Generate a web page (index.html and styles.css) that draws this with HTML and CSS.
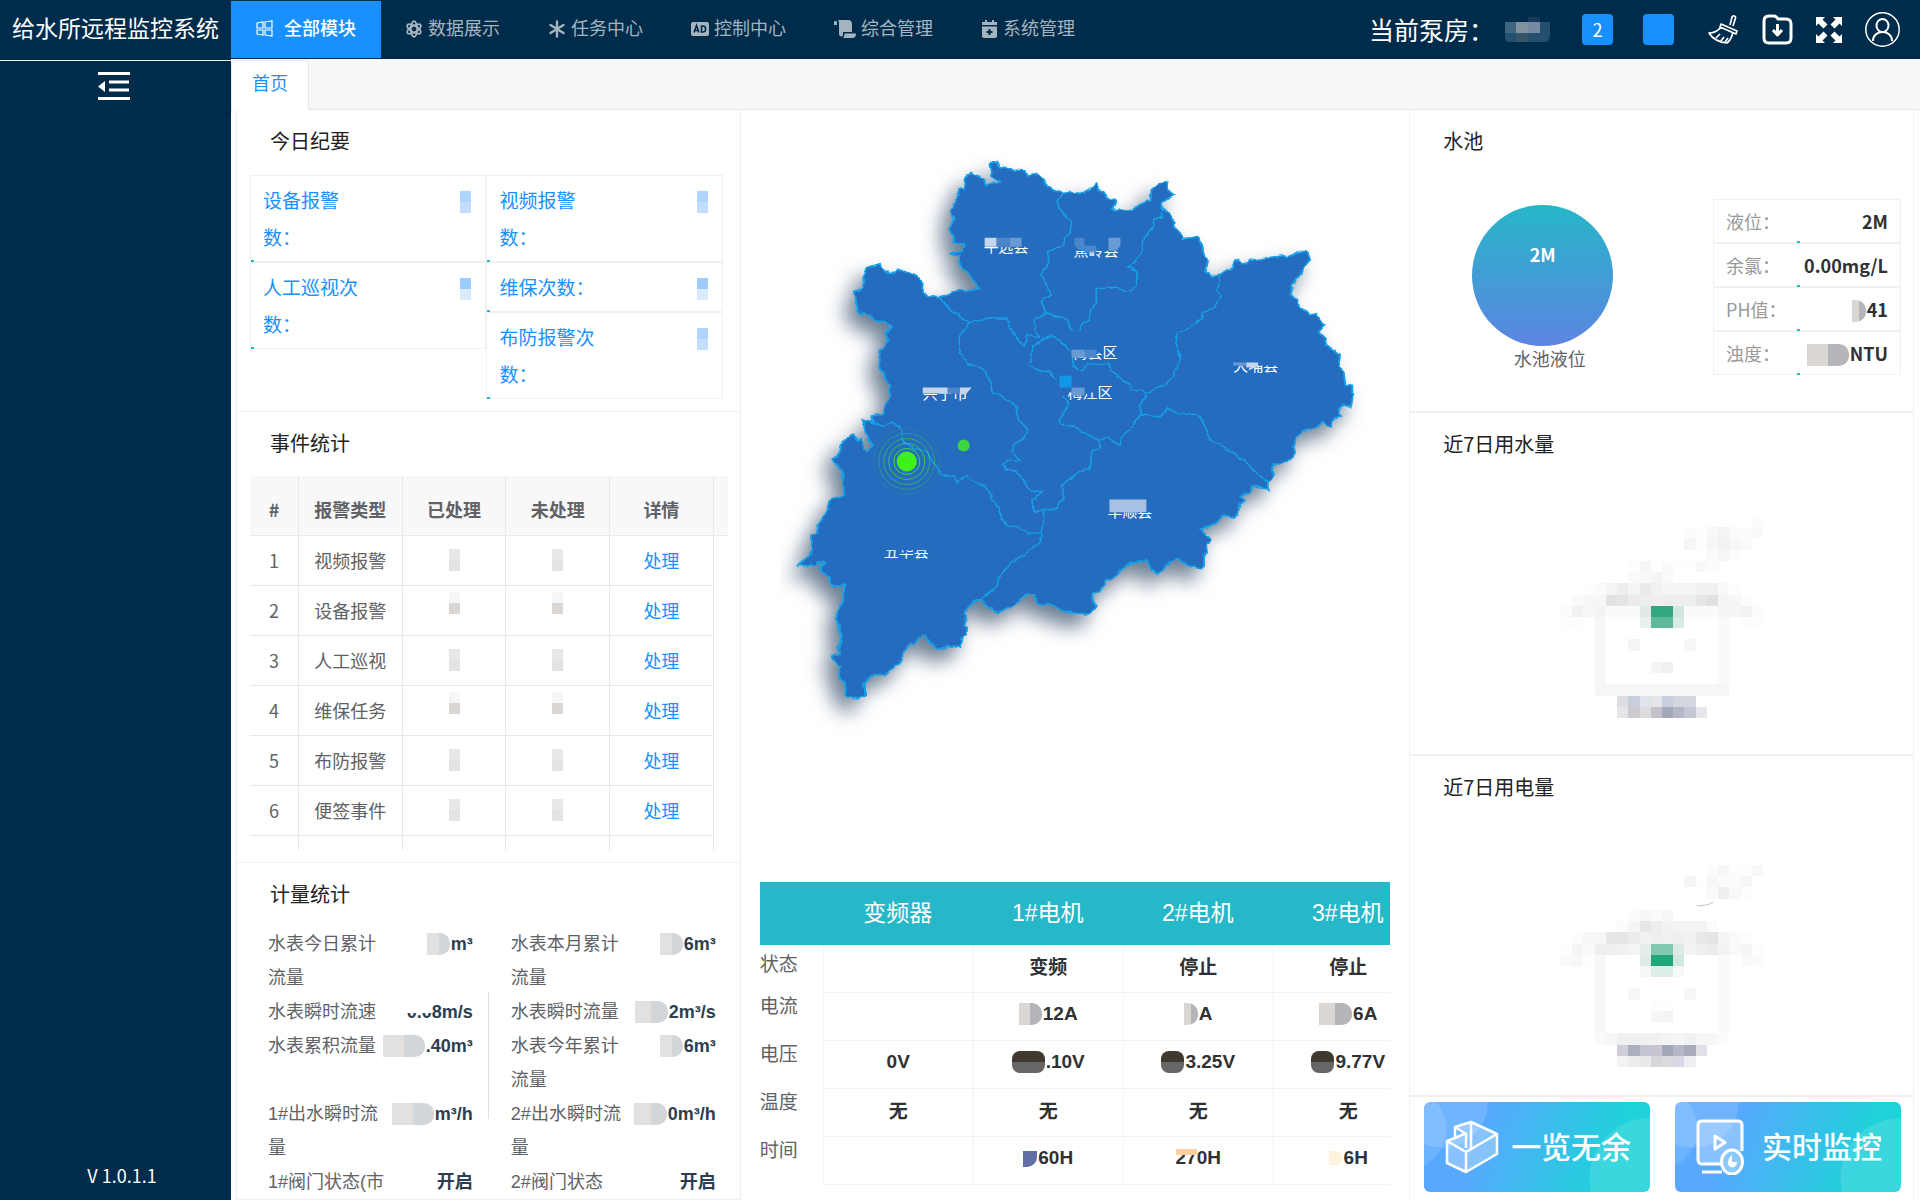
FILE: index.html
```
<!DOCTYPE html>
<html lang="zh-CN">
<head>
  <meta charset="UTF-8">
  <meta name="viewport" content="width=device-width, initial-scale=1.0">
  <title>给水所远程监控系统</title>
  <link rel="stylesheet" href="styles.css">
</head>
<body>

  <!-- 顶部导航 -->
  <header class="header">
    <div class="logo">给水所远程监控系统</div>
    <nav class="nav">
      <a href="#" class="nav-item active">
        <svg width="17" height="17" viewBox="0 0 17 17" fill="none" stroke="currentColor" stroke-width="1.2"><path d="M1 3l6-1v6H1zM9 2l7-1v7H9zM1 10h6v5l-6-1zM9 10h7v6l-7-1z"/></svg>
        <span>全部模块</span>
      </a>
      <a href="#" class="nav-item">
        <svg width="18" height="18" viewBox="0 0 18 18" fill="none" stroke="currentColor" stroke-width="1.8"><ellipse cx="9" cy="9" rx="3.2" ry="7.8"/><ellipse cx="9" cy="9" rx="3.2" ry="7.8" transform="rotate(60 9 9)"/><ellipse cx="9" cy="9" rx="3.2" ry="7.8" transform="rotate(-60 9 9)"/></svg>
        <span>数据展示</span>
      </a>
      <a href="#" class="nav-item">
        <svg width="18" height="18" viewBox="0 0 18 18" stroke="currentColor" stroke-width="2.4" stroke-linecap="round"><path d="M9 1.500v15M2.500 5l13 8M15.500 5l-13 8"/></svg>
        <span>任务中心</span>
      </a>
      <a href="#" class="nav-item">
        <svg width="18" height="18" viewBox="0 0 18 18"><rect y="2" width="18" height="14" rx="2" fill="currentColor"/><path d="M3 12.500l2.500-7 2.500 7M4 10.500h3M10.500 6v6h1.500c3.500 0 3.500-6 0-6z" fill="none" stroke="#002c4b" stroke-width="1.600"/></svg>
        <span>控制中心</span>
      </a>
      <a href="#" class="nav-item">
        <svg width="22" height="18" viewBox="0 0 22 18" fill="currentColor"><path d="M0 5V2.500C0 .5 3 .5 3 2.500V5zM4 0h10c3 0 4 2 4 4v8H9v3c0 2-4 2-4-1V3c0-2-.5-2.500-1-3zM10.500 13.500H22c0 3-1 4.500-4 4.500H8c2 0 2.500-2 2.500-4.500z"/></svg>
        <span>综合管理</span>
      </a>
      <a href="#" class="nav-item">
        <svg width="17" height="18" viewBox="0 0 17 18"><path d="M4 0h2v2h5V0h2v2h3v3H1V2h3zM1 6.500h15V16q0 2-2 2H3q-2 0-2-2z" fill="currentColor"/><path d="M8.500 9v6M5.500 12h6" stroke="#002c4b" stroke-width="2"/></svg>
        <span>系统管理</span>
      </a>
    </nav>
    <div class="tools">
      <span class="pump">当前泵房：</span>
      <svg class="pump-name" width="45" height="26" viewBox="0 0 45 26"><path d="M0 5h45v12c0 5-2 8-5 8H4c-3 0-4-2-4-5z" fill="#24506e"/><path d="M0 5h11v11H0z" fill="#3d6580"/><path d="M11 5h12v11H11z" fill="#7f929d"/><path d="M23 5h12v11H23z" fill="#7889a4"/><path d="M23 0h12v5H23z" fill="#163a5c"/><path d="M11 16h12v9H11z" fill="#375469"/></svg>
      <button class="badge" type="button">2</button>
      <button class="badge" type="button" aria-label="消息"></button>
      <button class="tool broom" type="button" aria-label="清理">
        <svg width="31" height="30" viewBox="0 0 31 30" fill="none" stroke="#fff" stroke-width="1.700" stroke-linejoin="round"><path d="M22 10l2-8c1-2 4-1 3.500 1L25 11M13 9l16 7-1 3-16-7zM13 12c-3 4-7 6-12 6 3 5 9 9 18 10 4-3 5-6 6-11M8 23l4-4M13 26l3-4M17 27l3-4"/></svg>
      </button>
      <button class="tool" type="button" aria-label="下载">
        <svg width="31" height="31" viewBox="0 0 31 31" fill="none" stroke="#fff" stroke-width="3" stroke-linejoin="round"><path d="M2 7q0-5 5-5h5q2 0 4 3h8q5 0 5 5v14q0 5-5 5H7q-5 0-5-5z"/><path d="M15.500 10v10M11 16l4.500 5 4.500-5"/></svg>
      </button>
      <button class="tool" type="button" aria-label="全屏">
        <svg width="26" height="26" viewBox="0 0 26 26" fill="#fff"><path d="M0 0h9L6.500 2.500l5 5-4 4-5-5L0 9zM26 0v9l-2.500-2.500-5 5-4-4 5-5L17 0zM0 26v-9l2.500 2.500 5-5 4 4-5 5L9 26zM26 26h-9l2.500-2.500-5-5 4-4 5 5L26 17z"/></svg>
      </button>
      <button class="tool" type="button" aria-label="用户">
        <svg width="35" height="35" viewBox="0 0 35 35" fill="none" stroke="#fff" stroke-width="1.500"><circle cx="17.500" cy="17.500" r="16.700"/><ellipse cx="17.500" cy="13.500" rx="6" ry="6.500" stroke-width="2"/><path d="M8 29c0-12 19-12 19 0" stroke-width="2"/></svg>
      </button>
    </div>
  </header>

  <div class="body">
    <!-- 侧边栏 -->
    <aside class="sidebar">
      <button class="collapse" type="button" aria-label="收起菜单">
        <svg width="32" height="28" viewBox="0 0 32 28"><path d="M0 1.500h32M11 10h20M11 18h20M0 26.500h32" stroke="#fff" stroke-width="3"/><path d="M7 9v11L0 14.500z" fill="#fff"/></svg>
      </button>
      <div class="version">V 1.0.1.1</div>
    </aside>

    <main class="main">
      <div class="tabs"><a href="#" class="tab">首页</a></div>

      <div class="columns">
        <!-- 左侧 -->
        <div class="col">
          <section class="panel">
            <h2>今日纪要</h2>
            <div class="summary">
              <div class="summary-col">
                <div class="summary-item"><span>设备报警数：</span><i class="cell c-blue"></i></div>
                <div class="summary-item"><span>人工巡视次数：</span><i class="cell c-sky"></i></div>
              </div>
              <div class="summary-col">
                <div class="summary-item"><span>视频报警数：</span><i class="cell c-blue"></i></div>
                <div class="summary-item"><span>维保次数：</span><i class="cell c-sky"></i></div>
                <div class="summary-item"><span>布防报警次数：</span><i class="cell c-blue"></i></div>
              </div>
            </div>
          </section>

          <section class="panel">
            <h2>事件统计</h2>
            <div class="event-wrap">
              <table class="events">
                <colgroup><col class="w-index"><col><col><col><col><col class="w-gutter"></colgroup>
                <thead>
                  <tr><th>#</th><th>报警类型</th><th>已处理</th><th>未处理</th><th>详情</th><th></th></tr>
                </thead>
                <tbody>
                  <tr><td>1</td><td>视频报警</td><td><i class="cell c-gray"></i></td><td><i class="cell c-gray"></i></td><td><a href="#">处理</a></td><td></td></tr>
                  <tr><td>2</td><td>设备报警</td><td><i class="cell c-low"></i></td><td><i class="cell c-low"></i></td><td><a href="#">处理</a></td><td></td></tr>
                  <tr><td>3</td><td>人工巡视</td><td><i class="cell c-gray"></i></td><td><i class="cell c-gray"></i></td><td><a href="#">处理</a></td><td></td></tr>
                  <tr><td>4</td><td>维保任务</td><td><i class="cell c-low"></i></td><td><i class="cell c-low"></i></td><td><a href="#">处理</a></td><td></td></tr>
                  <tr><td>5</td><td>布防报警</td><td><i class="cell c-gray"></i></td><td><i class="cell c-gray"></i></td><td><a href="#">处理</a></td><td></td></tr>
                  <tr><td>6</td><td>便签事件</td><td><i class="cell c-gray"></i></td><td><i class="cell c-gray"></i></td><td><a href="#">处理</a></td><td></td></tr>
                  <tr><td></td><td></td><td></td><td></td><td></td><td></td></tr>
                </tbody>
              </table>
            </div>
          </section>

          <section class="panel">
            <h2>计量统计</h2>
            <div class="meters">
              <div class="meter"><span>水表今日累计流量</span><b><i class="blob w2"></i>m³</b></div>
              <div class="meter"><span>水表本月累计流量</span><b><i class="blob w2"></i>6m³</b></div>
              <div class="meter"><span>水表瞬时流速</span><b><em class="wiped">0.0</em>8m/s</b></div>
              <div class="meter"><span>水表瞬时流量</span><b><i class="blob w3"></i>2m³/s</b></div>
              <div class="meter"><span>水表累积流量</span><b><i class="blob w4"></i>.40m³</b></div>
              <div class="meter"><span>水表今年累计流量</span><b><i class="blob w2"></i>6m³</b></div>
              <div class="meter"><span>1#出水瞬时流量</span><b><i class="blob w4"></i>m³/h</b></div>
              <div class="meter"><span>2#出水瞬时流量</span><b><i class="blob w3"></i>0m³/h</b></div>
              <div class="meter"><span>1#阀门状态(市</span><b>开启</b></div>
              <div class="meter"><span>2#阀门状态</span><b>开启</b></div>
            </div>
          </section>
        </div>

        <!-- 中间 -->
        <div class="col center">
          <svg class="map" viewBox="0 0 600 600" role="img" aria-label="区域地图">
            <defs>
              <filter id="rough" x="-5%" y="-5%" width="110%" height="110%" color-interpolation-filters="sRGB">
                <feTurbulence type="fractalNoise" baseFrequency="0.12" numOctaves="2" seed="4"/>
                <feDisplacementMap in="SourceGraphic" scale="5" xChannelSelector="R" yChannelSelector="G"/>
              </filter>
            </defs>
            <g class="map-shadow"><g filter="url(#rough)"><g transform="scale(.3827 .3333)">
              <path class="land" d="M550 68L568 70 575 80 600 86 640 90 645 108 660 106 675 102 690 118 700 140 718 152 738 160 762 157 795 162 812 144 826 130 836 148 848 160 860 180 880 182 870 205 880 213 925 208 940 196 960 182 970 180 972 150 990 132 1012 128 1012 148 1032 166 1000 185 998 205 1016 216 1032 245 1034 265 1048 280 1055 296 1090 292 1106 316 1108 340 1120 365 1114 398 1132 408 1156 402 1185 378 1192 360 1220 372 1228 362 1275 354 1320 348 1326 354 1340 350 1352 334 1376 336 1388 360 1376 376 1370 392 1352 418 1340 435 1342 455 1336 464 1355 484 1358 500 1388 526 1404 522 1416 545 1428 558 1410 576 1425 592 1430 616 1448 628 1466 648 1462 675 1476 700 1480 738 1498 740 1498 780 1494 804 1476 796 1462 810 1466 828 1450 840 1440 862 1420 848 1404 862 1370 872 1350 896 1345 920 1348 940 1340 955 1325 965 1310 975 1295 970 1288 988 1290 1010 1280 1030 1278 1050 1236 1040 1230 1060 1205 1068 1215 1082 1202 1090 1200 1120 1188 1133 1160 1128 1145 1148 1118 1165 1102 1170 1128 1202 1118 1215 1120 1238 1110 1248 1110 1278 1100 1288 1070 1280 1042 1257 1022 1268 990 1305 972 1290 960 1265 930 1270 905 1277 895 1292 868 1318 852 1324 850 1338 835 1355 820 1358 820 1385 828 1398 820 1412 808 1425 760 1420 736 1414 720 1400 675 1392 665 1368 645 1364 630 1380 622 1395 600 1408 568 1420 545 1408 530 1382 510 1382 482 1424 488 1440 482 1458 490 1468 486 1490 474 1500 470 1526 448 1520 412 1530 395 1515 378 1488 360 1500 352 1515 338 1518 335 1532 320 1542 322 1560 312 1575 298 1580 290 1595 270 1610 240 1610 220 1630 220 1668 210 1676 178 1676 172 1666 172 1630 155 1618 155 1585 136 1555 155 1545 152 1525 162 1495 152 1470 148 1430 152 1410 168 1385 168 1335 148 1344 132 1338 130 1315 108 1298 108 1280 118 1270 100 1268 96 1278 46 1280 80 1250 84 1230 80 1215 82 1190 96 1185 102 1155 115 1130 122 1115 130 1082 158 1072 168 1066 165 1030 162 998 138 960 150 952 162 908 188 890 196 885 200 905 212 898 220 925 232 932 242 918 232 900 224 880 216 838 245 850 242 830 272 822 275 795 292 772 285 740 275 715 258 670 262 635 284 605 276 580 292 560 272 545 256 545 240 528 206 520 200 490 196 455 218 445 218 415 230 382 262 372 274 398 300 398 310 388 335 400 360 410 376 432 374 455 384 468 412 474 440 466 470 450 500 452 522 446 508 425 490 400 470 378 468 350 446 342 478 334 484 315 455 308 455 290 442 270 455 238 448 215 460 180 470 145 484 148 486 115 500 98 535 116 538 140 575 125 556 110Z"/>
              <path class="line" d="M738 160L728 185 730 208 750 230 766 252 760 275 745 295 738 318 700 336 704 368 684 404 708 462 684 485 696 522
                M1000 215L998 235 976 240 980 260 955 290 946 345 912 385 934 395 932 435 918 457 882 446 828 446 828 488 812 515 812 540 790 555 785 576
                M696 522L750 535 766 575
                M696 522L665 540 668 575 680 592 645 588 641 618 618 595 592 538 548 538 495 548 470 530 440 505 420 474
                M495 548L470 590 468 630 490 672 530 688 546 712 556 760 598 782 618 800 625 840 648 870 640 895 612 915 608 935 628 962 600 962 582 975 590 990 605 990 640 1018 648 1048 685 1058 662 1080 665 1120 690 1115 690 1140 684 1180 650 1182 625 1165 595 1160 576 1130 574 1105 556 1085 540 1045 510 1028 488 1010 464 1030 455 1012 425 1008 400 965 385 940 330 915 316 900 316 870 296 848 272 858 232 845
                M668 610L680 605 710 588 740 610 766 640 766 680 790 690 805 672 838 675 860 672 870 695 925 750 962 760
                M680 605L662 620 655 678 680 696 705 695 722 718
                M740 770L758 795 730 840 735 857 770 864 830 900 842 920 838 930 818 932 808 988 785 995 738 1040 745 1070 720 1108 690 1115
                M830 900L855 895 890 915 895 890 925 860 930 840 945 822 940 800 962 765
                M962 760L1000 740 1030 710 1048 658 1036 610 1040 580 1062 570 1102 540 1106 518 1138 508 1155 468 1142 450 1156 402
                M945 822L992 836 1012 805 1045 824 1092 825 1104 840 1130 905 1160 920 1230 975 1236 992 1280 1028
                M684 1180L678 1210 652 1235 605 1270 572 1315 568 1340 530 1380"/>
            </g></g></g>

            <!-- 区县名称 -->
            <g class="place">
              <text x="204" y="112">平远县</text>
              <text x="294" y="116">蕉岭县</text>
              <text x="293" y="218">梅县区</text>
              <text x="288" y="258">梅江区</text>
              <text x="143" y="259">兴宁市</text>
              <text x="454" y="231">大埔县</text>
              <text x="328" y="378">丰顺县</text>
              <text x="104" y="418">五华县</text>
            </g>
            <g fill="#256cbe">
              <path d="M203 96h48v11h-48zM293 100h48v11h-48zM291 202h33v11h-33zM286 242h32v11h-32zM142 243h48v11h-48zM453 215h48v11h-48zM327 362h48v11h-48zM103 402h48v9h-48z"/>
            </g>
            <path fill="#c5d5ec" d="M205 98h12v9h-12zM143 248h25v6h-25zM467 223h12v5h-12zM180 248h12l-6 7h-6z"/>
            <path fill="#6a9ad4" d="M230 98h12v9h-12zM292 210h13v8h-13zM292 248h13v8h-13zM454 223h13v3h-13zM329 98h12v8l-4 5h-8z"/>
            <path fill="#4b86cb" d="M217 98h13v9h-13zM295 98h10v12h-6l-4-4zM305 106h12v6h-12zM168 248h12v6h-12zM305 210h12v8h-12z"/>
            <path fill="#a8c0e5" d="M330 360h37v13h-37z"/>
            <path fill="#1296e8" d="M280 236h12v12h-12z"/>

            <!-- 站点 -->
            <g fill="none" stroke="#3edc2c" stroke-width="1">
              <circle cx="127" cy="322" r="13"/>
              <circle cx="127" cy="322" r="18" opacity=".8"/>
              <circle cx="127" cy="322" r="23" opacity=".6"/>
              <circle cx="127" cy="322" r="28" opacity=".4"/>
              <circle cx="127" cy="322" r="33" opacity=".15"/>
            </g>
            <circle cx="127" cy="322" r="10" fill="#40f01c"/>
            <circle cx="184" cy="306" r="6" fill="#3cd73c"/>
          </svg>

          <div class="motor-wrap">
            <table class="motors">
              <thead>
                <tr><th></th><th>变频器</th><th>1#电机</th><th>2#电机</th><th>3#电机</th></tr>
              </thead>
              <tbody>
                <tr><th scope="row">状态</th><td></td><td>变频</td><td>停止</td><td>停止</td></tr>
                <tr><th scope="row">电流</th><td></td><td><i class="blob w2 mid"></i>12A</td><td><i class="blob w1 mid"></i>A</td><td><i class="blob w3 mid"></i>6A</td></tr>
                <tr><th scope="row">电压</th><td>0V</td><td><i class="blob w3 dark"></i>.10V</td><td><i class="blob w2 dark"></i>3.25V</td><td><i class="blob w2 dark"></i>9.77V</td></tr>
                <tr><th scope="row">温度</th><td>无</td><td>无</td><td>无</td><td>无</td></tr>
                <tr><th scope="row">时间</th><td></td><td><i class="blob w1 indigo"></i>60H</td><td><em class="wiped orange">27</em>0H</td><td><i class="blob w1 cream"></i>6H</td></tr>
              </tbody>
            </table>
          </div>
        </div>

        <!-- 右侧 -->
        <div class="col right">
          <section class="panel">
            <h2>水池</h2>
            <div class="pool">
              <figure class="gauge">
                <div class="ball">2M</div>
                <figcaption>水池液位</figcaption>
              </figure>
              <dl class="quality">
                <div><dt>液位：</dt><dd>2M</dd></div>
                <div><dt>余氯：</dt><dd>0.00mg/L</dd></div>
                <div><dt>PH值：</dt><dd><i class="blob w1 mid"></i>41</dd></div>
                <div><dt>浊度：</dt><dd><i class="blob w4 mid"></i>NTU</dd></div>
              </dl>
            </div>
          </section>

          <section class="panel">
            <h2>近7日用水量</h2>
            <div class="empty"><svg id="water" viewBox="0 0 18 18" shape-rendering="crispEdges"></svg></div>
          </section>

          <section class="panel">
            <h2>近7日用电量</h2>
            <div class="empty power"><svg id="power" viewBox="0 0 18 18" shape-rendering="crispEdges"></svg></div>
          </section>

          <section class="panel actions">
            <button class="action" type="button">
              <svg width="54" height="54" viewBox="0 0 54 54" fill="none" stroke="#fff" stroke-width="2.500" stroke-linejoin="round"><path d="M1 21l20-7-11-7L26 1l27 13v20L21 53 1 43z" fill="#fff" fill-opacity=".3" stroke="none"/><path d="M2 21l8-3V7l16-5 26 12v20L21 52 2 43zM2 21l19 11 31-18M21 32v20M10 7l11 7v14M10 18l11-5M26 2v28"/></svg>
              <span>一览无余</span>
            </button>
            <button class="action" type="button">
              <svg width="48" height="56" viewBox="0 0 48 56" fill="none" stroke="#fff" stroke-width="3" stroke-linejoin="round"><path d="M25 45H6q-4 0-4-5V6q0-4 4-4h36q4 0 4 4v26" fill="#fff" fill-opacity=".3"/><path d="M19 17v13l10-6.500zM6 53h20"/><ellipse cx="36" cy="43" rx="10.500" ry="12" fill="#8cc9f8"/><path d="M36 36v7h5c0 7-9 7-9 1 0-3 1-5 4-8z" fill="#fff" stroke="none"/></svg>
              <span>实时监控</span>
            </button>
          </section>
        </div>
      </div>
    </main>
  </div>

  <script src="script.js"></script>
</body>
</html>
```
FILE: styles.css
```
* { box-sizing: border-box; }

body {
  margin: 0;
  height: 100vh;
  display: flex;
  flex-direction: column;
  overflow: hidden;
  background: #fff;
  color: #606266;
  font-family: "Noto Sans CJK SC", sans-serif;
  font-size: 18px;
}

a { color: #1890ff; text-decoration: none; }
button { padding: 0; border: none; background: none; color: #fff; font-family: inherit; cursor: pointer; }
h2, figure, dl, dd { margin: 0; }

/* header */
.header {
  display: flex;
  flex: none;
  height: 59px;
  background: #002c4b;
  color: #fff;
}

.logo {
  width: 231px;
  padding-left: 12px;
  font-size: 23px;
  line-height: 55px;
  white-space: nowrap;
}

.nav { display: flex; padding: 1px 0; }

.nav-item {
  display: flex;
  align-items: center;
  gap: 5px;
  padding: 0 24px;
  color: #a6b4bf;
  white-space: nowrap;
}

.nav-item svg { margin-bottom: 2px; }
.nav-item span { line-height: 52px; padding-bottom: 5px; }
.nav-item.active { gap: 11px; padding: 0 25px; background: #1890ff; color: #fff; font-weight: 500; }

.tools {
  display: flex;
  align-items: center;
  gap: 23px;
  margin-left: auto;
  padding-right: 20px;
}

.pump { font-size: 25px; line-height: 56px; padding-bottom: 2px; white-space: nowrap; margin-right: -12px; }
.pump-name { margin-right: 9px; }

.badge {
  width: 31px;
  height: 31px;
  margin-right: 7px;
  border-radius: 4px;
  background: #1890ff;
  font-size: 18px;
  line-height: 29px;
}

.tool { display: flex; }
.broom { margin-left: 4px; }

/* sidebar */
.body { display: flex; flex: 1; min-height: 0; }

.sidebar {
  display: flex;
  flex-direction: column;
  flex: none;
  width: 231px;
  margin-top: 1px;
  border-top: 1px solid #fff;
  background: #002c4b;
  box-shadow: 0 -1px #002c4b;
}

.collapse {
  height: 50px;
  padding: 4px 4px 0 0;
  box-shadow: 0 1px 3px rgba(0, 21, 41, 0.4);
}

.version { margin-top: auto; padding: 0 0 12px 13px; color: #fff; font-size: 18px; text-align: center; }

/* tabs */
.main { flex: 1; min-width: 0; overflow: hidden; }
.tabs { display: flex; height: 51px; padding-top: 1px; background: #f7f7f7; border-bottom: 1px solid #e8e8e8; }

.tab {
  height: 50px;
  padding: 0 20px;
  border: 1px solid #e8e8e8;
  border-bottom: none;
  border-radius: 5px 5px 0 0;
  background: #fff;
  line-height: 42px;
}

.columns {
  display: grid;
  grid-template-columns: 151fr 200fr 151fr;
  padding: 0 6px 0 5px;
}

.col { min-width: 0; }

.panel {
  border: 1px solid #f0f0f0;
  border-top: none;
}

h2 {
  height: 64px;
  padding-left: 33px;
  color: #222;
  font-size: 20px;
  font-weight: 400;
  line-height: 62px;
}

/* masked digits */
.cell { display: inline-block; width: 11px; height: 22px; vertical-align: middle; }
.c-blue { background: linear-gradient(#aed4ff 50%, #c3deff 50%); }
.c-sky { background: linear-gradient(#9dcbff 50%, #d9ebff 50%); }
.c-gray { background: linear-gradient(#e9e8e8 50%, #e4e3e2 50%); }
.c-low { background: linear-gradient(#f5f6f7 50%, #d9d6d4 50%); }

.blob {
  display: inline-block;
  height: 22px;
  margin-right: 1px;
  border-radius: 0 10px 10px 0;
  background: linear-gradient(90deg, #e2e1e0 50%, #d3d6d8 50%);
  vertical-align: -5px;
}

.w1 { width: 14px; }
.w2 { width: 23px; }
.w3 { width: 33px; }
.w4 { width: 42px; }
.mid { background: linear-gradient(90deg, #d9d6d4 50%, #b4b5b8 50%); }
.dark { border-radius: 8px; background: linear-gradient(#40392f 50%, #666 50%); }
.indigo { background: #6070a4; border-radius: 0 0 10px 0; height: 16px; vertical-align: -3px; }
.cream { background: #fff3e0; height: 14px; vertical-align: -1px; }

.wiped { position: relative; font-style: normal; }
.wiped::after {
  content: "";
  position: absolute;
  top: 0;
  left: 0;
  right: 0;
  height: 11px;
  background: #fff;
}
.orange::after { top: 2px; height: 6px; background: #ffcf9f; }

/* summary */
.summary { display: flex; align-items: flex-start; padding: 1px 17px 12px 13px; }
.summary-col { flex: 1; }

.summary-item {
  position: relative;
  display: flex;
  justify-content: space-between;
  padding: 5px 14px 6px 12px;
  border: 1px solid #f0f0f0;
  color: #1890ff;
  font-size: 19px;
  line-height: 37px;
}

.summary-item span { width: 110px; }
.summary-item .cell { margin-top: 10px; }

.summary-item::after,
.quality div::after {
  content: "";
  position: absolute;
  left: 0;
  bottom: -1px;
  width: 3px;
  height: 2px;
  background: #26b8c9;
}

/* events */
.event-wrap { height: 374px; margin: 0 12px 12px 13px; overflow: hidden; }

.events {
  width: 100%;
  border-collapse: separate;
  border-spacing: 0;
  table-layout: fixed;
  text-align: center;
}

.w-index { width: 49px; }
.w-gutter { width: 14px; }

.events th, .events td {
  padding: 0;
  border-right: 1px solid #e8e8e8;
  border-bottom: 1px solid #e8e8e8;
}

.events th { height: 60px; padding-top: 6px; background: #f8f8f8; font-weight: 700; }
.events td { height: 50px; padding-bottom: 2px; line-height: 28px; }
.events th:last-child { border-right: none; }
.events td:last-child { border: none; }
.events .cell { margin-bottom: 4px; }
.events .c-low { margin-bottom: 14px; }

/* meters */
.meters {
  position: relative;
  display: grid;
  grid-template-columns: minmax(0, 1fr) minmax(0, 1fr);
  column-gap: 38px;
  padding: 0 24px 0 31px;
  font-family: "Liberation Sans", "Noto Sans CJK SC", sans-serif;
  line-height: 34px;
}

.meters::before {
  content: "";
  position: absolute;
  top: 65px;
  left: 50%;
  height: 127px;
  border-left: 1px solid #e0e0e0;
}

.meter { display: flex; justify-content: space-between; align-items: flex-start; }
.meter span { width: 116px; word-break: break-all; }
.meter b { color: #2c3e50; white-space: nowrap; }

/* map */
.center { padding: 30px 19px 0 19px; }
.map { display: block; width: 95%; margin-left: 20px; }
.map-shadow { filter: drop-shadow(-9px 12px 10px rgba(10, 40, 75, 0.6)); }
.land { fill: #256cbe; stroke: #16a0ea; stroke-width: 5; }
.line { fill: none; stroke: #16a0ea; stroke-width: 4; }
.place text { fill: #fff; font-size: 15px; }

/* motors */
.motor-wrap { margin-top: 143px; overflow: hidden; }

.motors {
  width: 663px;
  border-spacing: 0;
  table-layout: fixed;
  font-family: "Liberation Sans", "Noto Sans CJK SC", sans-serif;
  font-size: 19px;
  text-align: center;
}

.motors th { padding: 0; font-weight: 400; }
.motors thead th { height: 63px; padding-bottom: 5px; background: #26b8c9; color: #fff; font-size: 23px; }
.motors thead th:first-child { width: 63px; }
.motors tbody th { line-height: 28px; text-align: left; vertical-align: top; }
.motors tbody tr:first-child th { padding-top: 6px; }

.motors td {
  height: 48px;
  padding: 0 0 5px;
  border-left: 1px solid #f3f3f3;
  border-bottom: 1px solid #f3f3f3;
  color: #303133;
  font-weight: 700;
}

/* right column */
.right .panel + .panel { border-top: 1px solid #f0f0f0; }
.pool { display: flex; justify-content: space-between; padding: 25px 12px 36px 62px; }
.gauge { padding-top: 6px; }

.ball {
  width: 141px;
  height: 141px;
  border-radius: 50%;
  background: linear-gradient(#26b6c8, #5c85e2);
  color: #fff;
  font-weight: 700;
  line-height: 99px;
  text-align: center;
}

.gauge figcaption { padding-left: 14px; line-height: 24px; text-align: center; }
.quality { width: 188px; }

.quality div {
  position: relative;
  display: flex;
  justify-content: space-between;
  padding: 0 12px;
  border: 1px solid #f0f0f0;
  line-height: 42px;
}

.quality div::after { left: 83px; }
.quality dt { color: #999; }
.quality dd { color: #303133; font-weight: 700; }

.empty { display: flex; justify-content: center; padding: 39px 0 36px; }
.empty svg { width: 202px; height: 202px; }
.power { padding: 45px 0 28px; }

.actions { display: flex; gap: 25px; padding: 5px 12px 20px 14px; }

.action {
  display: flex;
  flex: 1;
  align-items: center;
  justify-content: space-between;
  height: 90px;
  padding: 0 19px 0 21px;
  border-radius: 6px;
  background:
    radial-gradient(circle at 100% 85%, rgba(255, 255, 255, 0.12) 60px, transparent 61px),
    radial-gradient(circle at 8% 0, rgba(255, 255, 255, 0.14) 45px, transparent 46px),
    radial-gradient(circle at -8% 30%, rgba(255, 255, 255, 0.12) 40px, transparent 41px),
    linear-gradient(110deg, #58a8ff 25%, #1fd1d9 80%);
  font-size: 30px;
  font-weight: 500;
}

.action span { padding-bottom: 4px; }
```
FILE: script.js
```
// each entry: [row, first column, colours...]
const water = [
  [0, 17, '#fcfcfc'],
  [1, 11, '#fcfcfc', '#fefefe', '#f8f8f8', '#f4f4f4', '#fbfbfb', '#fbfbfb', '#f9f9f9'],
  [2, 11, '#f6f6f6', '#fefefe', '#f6f6f6', '#f2f2f2', '#f7f7f7', '#fafafa'],
  [3, 13, '#fafafa', '#f6f6f6', '#fdfdfd'],
  [4, 6, '#fdfdfd', '#f6f6f6', '#fefefe', '#fafafa', '#fefefe', '#fefefe', '#f9f9f9', '#fcfcfc'],
  [5, 6, '#f9f9f9', '#f9f9f9', '#f5f5f5', '#fafafa'],
  [6, 2, '#fdfdfd', '#fafafa', '#f4f4f4', '#ededed', '#f4f4f4', '#ebebeb', '#f2f2f2', '#f5f5f5', '#f4f4f4', '#f5f5f5', '#f0f0f0', '#f0f0f0', '#f9f9f9', '#fdfdfd'],
  [7, 1, '#fafafa', '#f7f7f7', '#f6f6f6', '#e2e2e2', '#e4e4e4', '#ebebeb', '#eee', '#eee', '#ededed', '#eee', '#eee', '#e6e6e6', '#e0e0e0', '#f4f4f4', '#f6f6f6', '#fcfcfc'],
  [8, 0, '#fbfbfb', '#f1f1f1', '#f7f7f7', '#f3f3f3', '#fafafa', '#fafafa', '#fafafa', '#e0ebe7', '#32a881', '#32a881', '#d0e6df', '#fafafa', '#fafafa', '#fafafa', '#f5f5f5', '#f6f6f6', '#f2f2f2', '#fbfbfb'],
  [9, 0, '#fdfdfd', '#fdfdfd'],
  [9, 7, '#e7f1ee', '#5cb99a', '#5cb99a', '#daeae5'],
  [9, 16, '#fdfdfd', '#fdfdfd'],
  [11, 6, '#f5f5f5'],
  [11, 11, '#f6f6f6'],
  [13, 8, '#f5f5f5', '#f0f0f0'],
  [15, 3, ...Array(12).fill('#f6f6f6')],
  [16, 5, '#dddde2', '#c8cedb', '#dee4ea', '#e5e5ea', '#c9d0dd', '#d2d6df', '#d3d7e0'],
  [17, 5, '#e5e5e7', '#cdcad0', '#dfdadd', '#c3c1cb', '#a3a9ba', '#b5b8c8', '#c4c8d3', '#e6e7ec']
];

const power = [
  [0, 13, '#fbfbfb', '#f6f6f6', '#fdfdfd', '#fdfdfd', '#f8f8f8'],
  [1, 11, '#f5f5f5', '#fefefe', '#f7f7f7', '#fbfbfb', '#fbfbfb', '#f6f6f6'],
  [2, 13, '#fafafa', '#efefef', '#f8f8f8', '#fdfdfd'],
  [4, 6, '#fbfbfb', '#f7f7f7', '#fbfbfb', '#f7f7f7'],
  [5, 5, '#fbfbfb', '#f5f5f5', '#e6e6e6', '#eee', '#f2f2f2', '#f4f4f4', '#f4f4f4', '#f3f3f3', '#fbfbfb'],
  [6, 1, '#fdfdfd', '#f7f7f7', '#f6f6f6', '#e6e6e6', '#e6e6e6', '#ececec', '#f1f1f1', '#efefef', '#f1f1f1', '#efefef', '#f1f1f1', '#e9e9e9', '#e5e5e5', '#f4f4f4', '#fafafa', '#fdfdfd'],
  [7, 0, '#fdfdfd', '#f5f5f5', '#fafafa', '#efefef', '#eee', '#f0f0f0', '#f4f4f4', '#e4eeeb', '#80c8b0', '#80c8b0', '#dde9e5', '#f3f3f3', '#eee', '#ececec', '#f3f3f3', '#f9f9f9', '#f5f5f5', '#fdfdfd'],
  [8, 0, '#fafafa', '#f7f7f7', '#fdfdfd'],
  [8, 7, '#e0ebe7', '#20a87b', '#20a87b', '#d0e8df'],
  [8, 16, '#f9f9f9', '#fbfbfb'],
  [9, 7, '#f6f9f8', '#deeee9', '#deeee9', '#f6f9f8'],
  [11, 6, '#f6f6f6'],
  [11, 11, '#f6f6f6'],
  [12, 8, '#fdfdfd', '#fdfdfd'],
  [13, 8, '#f6f6f6', '#f3f3f3'],
  [15, 3, '#fafafa', '#f6f6f6', '#f0f0f0', '#eff0f2', '#f0f0f0', '#f0f1f3', '#f3f4f4', '#f5f5f5', '#eff0f2', '#f7f7f7', '#f7f7f7', '#fbfbfb'],
  [16, 5, '#d0ced7', '#acafc0', '#c3c5d3', '#c6c5d0', '#a3a8ba', '#b4b7c9', '#a8abbb', '#e0e0e7'],
  [17, 5, '#f3f3f3', '#eeecee', '#e9e8ea', '#d6d5db', '#dadadf', '#d9d9e3', '#eeeff3']
];

function rect(x, y, w, h, fill) {
  return `<rect x="${x}" y="${y}" width="${w}" height="${h}" fill="${fill}"/>`;
}

function draw(id, rows) {
  // side walls
  let html = rect(3, 8, 1, 7, '#f7f7f7') + rect(14, 8, 1, 7, '#fafafa');
  rows.forEach(([y, x, ...colors]) => {
    colors.forEach((c, i) => { html += rect(x + i, y, 1, 1, c); });
  });
  document.getElementById(id).innerHTML = html;
}

draw('water', water);
draw('power', power);

// smoke line above the roof
document.getElementById('power').innerHTML +=
  '<path d="M12.1 3.600Q12.900 3.700 13.600 3.300" fill="none" stroke="#ccc" stroke-width=".1" shape-rendering="auto"/>';
```
